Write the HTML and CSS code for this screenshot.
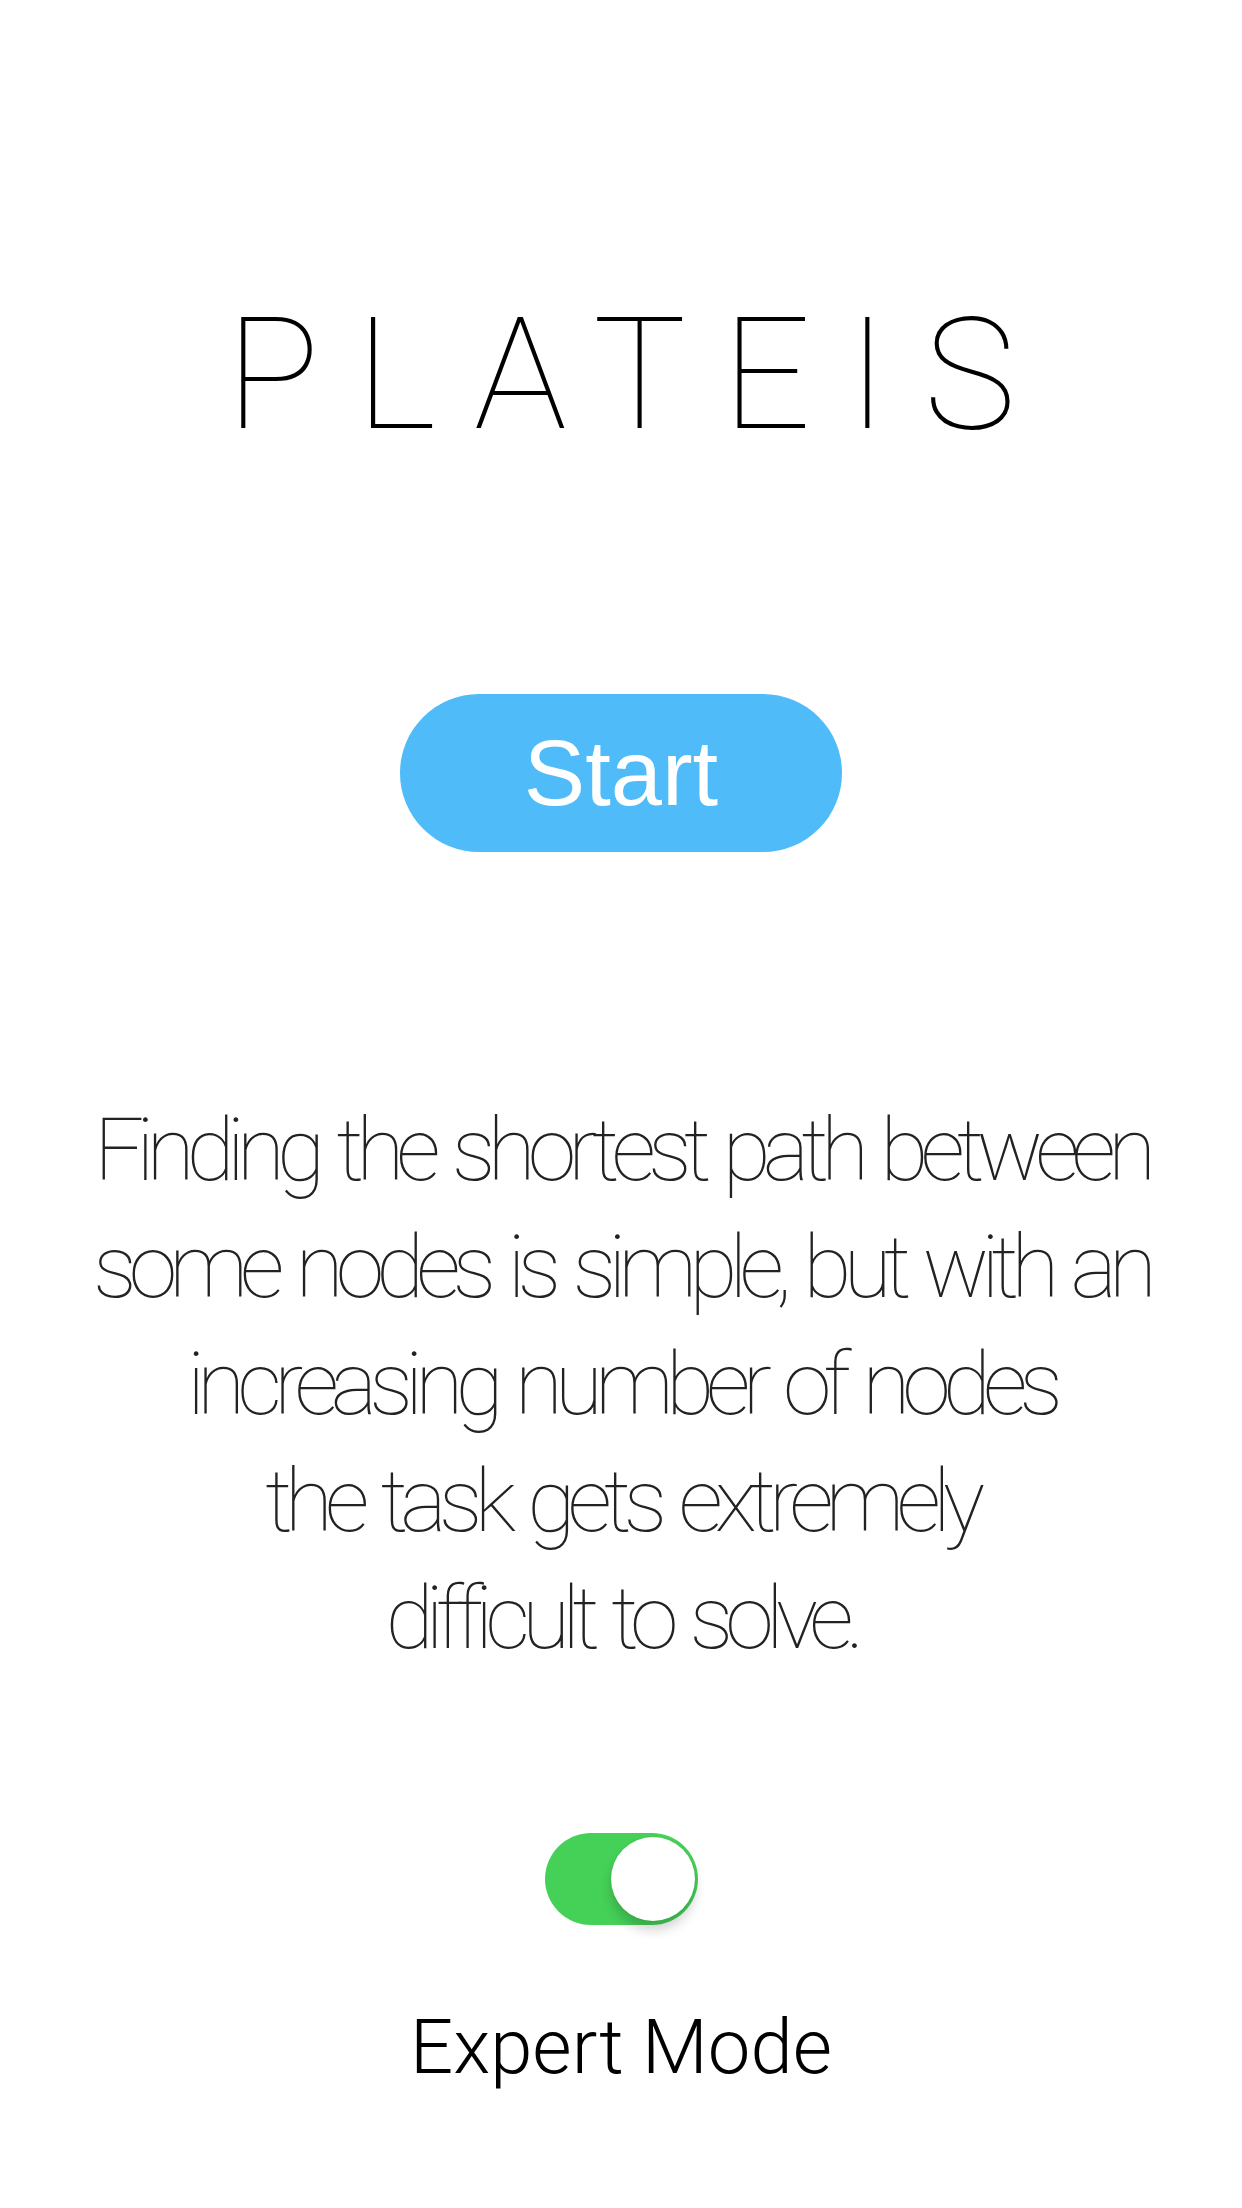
FILE: index.html
```html
<!DOCTYPE html>
<html lang="en">
<head>
<meta charset="utf-8">
<title>Plateis</title>
<link rel="stylesheet" href="styles.css">
</head>
<body>
<main class="screen">
  <h1 class="title">PLATEIS</h1>
  <button class="start-btn" type="button">Start</button>
  <p class="intro">Finding the shortest path between<br>some nodes is simple, but with an<br>increasing number of nodes<br>the task gets extremely<br>difficult to solve.</p>
  <div class="switch" role="switch" aria-checked="true"><span class="knob"></span></div>
  <div class="mode-label">Expert Mode</div>
</main>
</body>
</html>
```

FILE: styles.css
```css
html, body {
  margin: 0;
  padding: 0;
  background: #ffffff;
}

.screen {
  width: 1242px;
  height: 2208px;
  display: flex;
  flex-direction: column;
  align-items: center;
  overflow: hidden;
}

.title {
  margin: 297px 0 0 0;
  font-family: Roboto, "Liberation Sans", sans-serif;
  font-weight: 100;
  font-size: 156px;
  line-height: 156px;
  letter-spacing: 36px;
  padding-left: 36px;
  color: #000;
}

.start-btn {
  margin-top: 241px;
  width: 442px;
  height: 158px;
  border: none;
  border-radius: 79px;
  background: #4fbbf8;
  color: #fff;
  font-family: "Liberation Sans", Arial, sans-serif;
  font-size: 92px;
  line-height: 158px;
  padding: 0;
}

.intro {
  margin: 239px 0 0 0;
  text-align: center;
  white-space: nowrap;
  font-family: Roboto, "Liberation Sans", sans-serif;
  font-weight: 100;
  font-size: 88px;
  line-height: 117px;
  letter-spacing: -8px;
  word-spacing: 6px;
  color: #222;
}

.switch {
  margin-top: 157px;
  width: 153px;
  height: 92px;
  border-radius: 46px;
  background: #45d058;
  display: flex;
  align-items: center;
  justify-content: flex-end;
  padding: 0 3px;
  box-sizing: border-box;
}

.knob {
  width: 84px;
  height: 84px;
  border-radius: 50%;
  background: #fff;
  box-shadow: 0 9px 12px rgba(0,0,0,0.18), 0 0 2px rgba(0,0,0,0.08);
}

.mode-label {
  margin-top: 84px;
  font-family: Roboto, "Liberation Sans", sans-serif;
  font-weight: 300;
  font-size: 76px;
  line-height: 76px;
  color: #000;
}
```
